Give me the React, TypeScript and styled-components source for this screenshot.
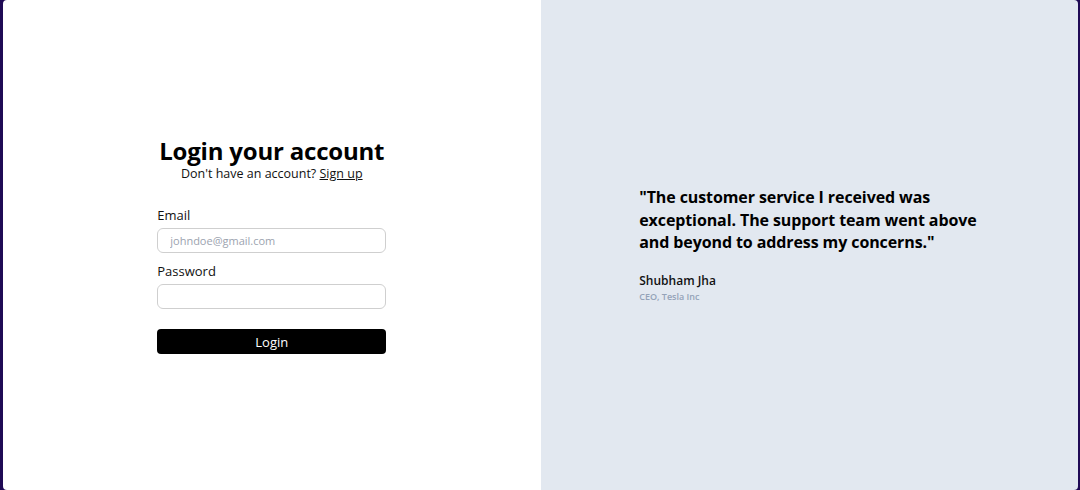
import { FC } from 'react'
import styled, { createGlobalStyle } from 'styled-components'

const GlobalStyle = createGlobalStyle`
  html, body {
    margin: 0;
    padding: 0;
    height: 100%;
  }
  body {
    background-color: #1f0a55;
    font-family: 'Open Sans', 'Noto Sans', sans-serif;
  }
  #root {
    height: 100%;
  }
`

const Frame = styled.div`
  height: 490px;
  box-sizing: border-box;
  padding: 0 2px 0 3px;
`

const Container = styled.main`
  height: 100%;
  display: grid;
  grid-template-columns: 1fr 1fr;
  border-radius: 4px;
  overflow: hidden;
`

const Left = styled.section`
  background-color: #ffffff;
  display: flex;
  align-items: center;
  justify-content: center;
`

const Right = styled.section`
  background-color: #e2e8f0;
  display: flex;
  align-items: center;
  justify-content: center;
`

const Form = styled.form`
  width: 229px;
  display: flex;
  flex-direction: column;
`

const Title = styled.h1`
  margin: 0;
  font-size: 24px;
  font-weight: 700;
  line-height: 30px;
  letter-spacing: -0.2px;
  white-space: nowrap;
  text-align: center;
  color: #000;
`

const Subtitle = styled.p`
  margin: 0 0 24px;
  font-size: 12.5px;
  line-height: 16px;
  text-align: center;
  color: #111;
`

const SignUp = styled.a`
  color: #111;
  text-decoration: underline;
`

const Label = styled.label`
  display: block;
  font-size: 13px;
  line-height: 18px;
  color: #111;
  margin-bottom: 4px;
`

const Input = styled.input<{ $gap?: number }>`
  box-sizing: border-box;
  width: 100%;
  height: 25px;
  padding: 0 12px;
  border: 1.5px solid #cfcfcf;
  border-radius: 6px;
  font-family: inherit;
  font-size: 11px;
  color: #111;
  background: #fff;
  margin-bottom: ${(p) => p.$gap ?? 9}px;
  outline: none;

  &::placeholder {
    color: #9ca3af;
  }
`

const Button = styled.button`
  height: 25px;
  border: none;
  border-radius: 4px;
  background-color: #000;
  color: #fff;
  font-family: inherit;
  font-size: 13px;
  cursor: pointer;
`

const Testimonial = styled.blockquote`
  margin: 0;
  width: 340px;
`

const Quote = styled.p`
  margin: 0 0 18px;
  font-size: 16px;
  font-weight: 700;
  line-height: 22.5px;
  letter-spacing: -0.1px;
  color: #000;
`

const Author = styled.p`
  margin: 0;
  font-size: 12px;
  font-weight: 600;
  line-height: 18px;
  color: #111;
`

const Role = styled.p`
  margin: 0;
  font-size: 9px;
  font-weight: 600;
  line-height: 14px;
  color: #94a3b8;
`

const App: FC = () => {
  return (
    <>
      <GlobalStyle />
      <Frame>
        <Container>
          <Left>
            <Form onSubmit={(e) => e.preventDefault()}>
              <Title>Login your account</Title>
              <Subtitle>
                Don't have an account? <SignUp href="#">Sign up</SignUp>
              </Subtitle>
              <Label htmlFor="email">Email</Label>
              <Input id="email" type="email" placeholder="johndoe@gmail.com" />
              <Label htmlFor="password">Password</Label>
              <Input id="password" type="password" $gap={20} />
              <Button type="submit">Login</Button>
            </Form>
          </Left>
          <Right>
            <Testimonial>
              <Quote>
                "The customer service I received was exceptional. The support
                team went above and beyond to address my concerns."
              </Quote>
              <Author>Shubham Jha</Author>
              <Role>CEO, Tesla Inc</Role>
            </Testimonial>
          </Right>
        </Container>
      </Frame>
    </>
  )
}

export default App
